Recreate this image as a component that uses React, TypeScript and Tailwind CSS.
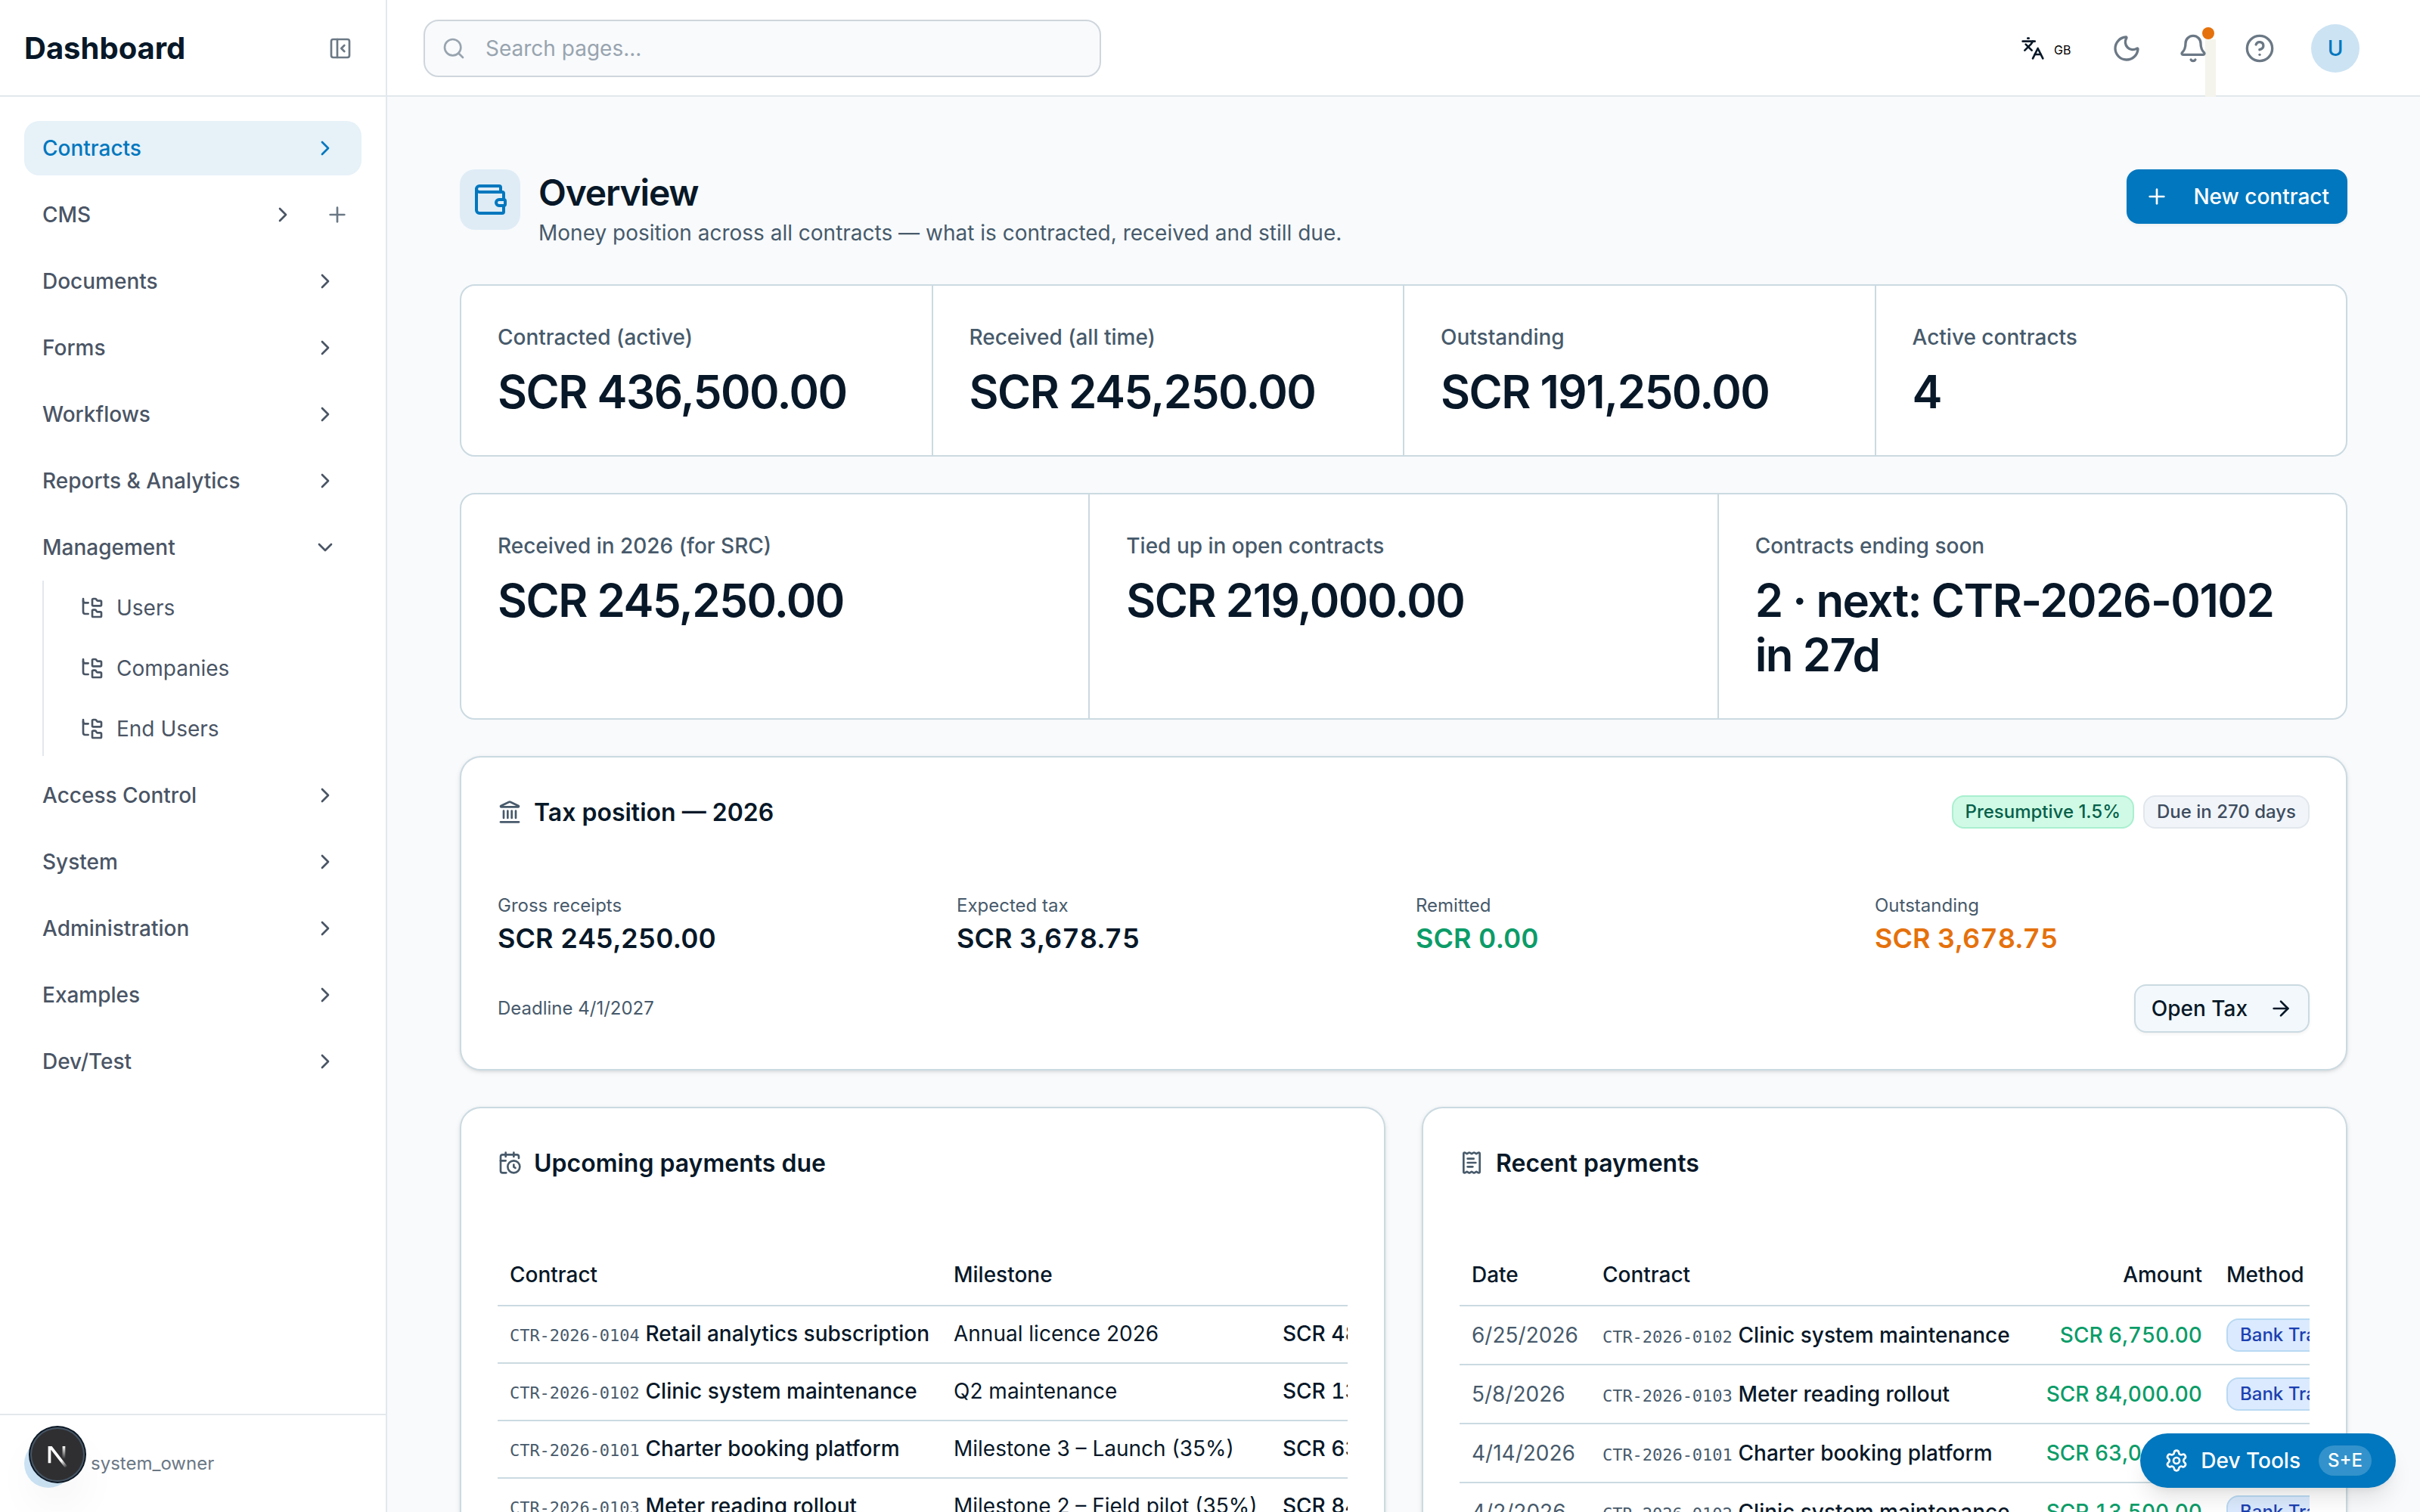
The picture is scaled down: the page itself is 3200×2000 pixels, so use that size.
import type { ReactNode } from 'react'
import clsx from 'clsx'
import {
  ArrowRight,
  Bell,
  CalendarClock,
  ChevronDown,
  ChevronRight,
  CircleHelp,
  FolderTree,
  Landmark,
  Languages,
  Moon,
  PanelLeftClose,
  Plus,
  ReceiptText,
  Search,
  Settings,
  Wallet,
} from 'lucide-react'

interface NavEntry {
  label: string
  active?: boolean
  canAdd?: boolean
  children?: string[]
}

const navEntries: NavEntry[] = [
  { label: 'Contracts', active: true },
  { label: 'CMS', canAdd: true },
  { label: 'Documents' },
  { label: 'Forms' },
  { label: 'Workflows' },
  { label: 'Reports & Analytics' },
  { label: 'Management', children: ['Users', 'Companies', 'End Users'] },
  { label: 'Access Control' },
  { label: 'System' },
  { label: 'Administration' },
  { label: 'Examples' },
  { label: 'Dev/Test' },
]

const totals = [
  { label: 'Contracted (active)', value: 'SCR 436,500.00' },
  { label: 'Received (all time)', value: 'SCR 245,250.00' },
  { label: 'Outstanding', value: 'SCR 191,250.00' },
  { label: 'Active contracts', value: '4' },
]

const yearStats = [
  { label: 'Received in 2026 (for SRC)', value: 'SCR 245,250.00' },
  { label: 'Tied up in open contracts', value: 'SCR 219,000.00' },
  { label: 'Contracts ending soon', value: '2 · next: CTR-2026-0102 in 27d' },
]

const taxFigures = [
  { label: 'Gross receipts', value: 'SCR 245,250.00', color: 'text-[#081828]' },
  { label: 'Expected tax', value: 'SCR 3,678.75', color: 'text-[#081828]' },
  { label: 'Remitted', value: 'SCR 0.00', color: 'text-[#0c9c68]' },
  { label: 'Outstanding', value: 'SCR 3,678.75', color: 'text-[#e5710c]' },
]

const upcoming = [
  { code: 'CTR-2026-0104', name: 'Retail analytics subscription', milestone: 'Annual licence 2026', amount: 'SCR 48,000.00' },
  { code: 'CTR-2026-0102', name: 'Clinic system maintenance', milestone: 'Q2 maintenance', amount: 'SCR 13,500.00' },
  { code: 'CTR-2026-0101', name: 'Charter booking platform', milestone: 'Milestone 3 – Launch (35%)', amount: 'SCR 63,000.00' },
  { code: 'CTR-2026-0103', name: 'Meter reading rollout', milestone: 'Milestone 2 – Field pilot (35%)', amount: 'SCR 84,000.00' },
]

const payments = [
  { date: '6/25/2026', code: 'CTR-2026-0102', name: 'Clinic system maintenance', amount: 'SCR 6,750.00' },
  { date: '5/8/2026', code: 'CTR-2026-0103', name: 'Meter reading rollout', amount: 'SCR 84,000.00' },
  { date: '4/14/2026', code: 'CTR-2026-0101', name: 'Charter booking platform', amount: 'SCR 63,000.00' },
  { date: '4/2/2026', code: 'CTR-2026-0102', name: 'Clinic system maintenance', amount: 'SCR 13,500.00' },
]

function NavItem({ entry }: { entry: NavEntry }) {
  const Chevron = entry.children ? ChevronDown : ChevronRight

  return (
    <li>
      <div
        className={clsx(
          'flex h-9 items-center rounded-[10px] pl-3 text-sm font-medium',
          entry.canAdd ? 'pr-2' : 'pr-4',
          entry.active ? 'bg-[#e6f1f8] text-[#0077be]' : 'text-[#4a5565]',
        )}
      >
        <span className="flex-1">{entry.label}</span>
        <Chevron className="size-4" />
        {entry.canAdd && <Plus className="ml-5 size-4 text-[#6b7885]" />}
      </div>
      {entry.children && (
        <ul className="mt-1 ml-3 flex flex-col gap-1 border-l border-[#e2e8ec] pl-3">
          {entry.children.map((child) => (
            <li key={child} className="flex h-9 items-center gap-2 px-3 text-sm text-[#4a5565]">
              <FolderTree className="size-4" />
              {child}
            </li>
          ))}
        </ul>
      )}
    </li>
  )
}

function Sidebar() {
  return (
    <aside className="flex w-64 shrink-0 flex-col border-r border-[#e2e8ec] bg-white">
      <div className="flex h-16 shrink-0 items-center justify-between border-b border-[#e2e8ec] pt-px pr-[22px] pl-4">
        <span className="text-xl font-bold">Dashboard</span>
        <PanelLeftClose className="size-4 text-[#6b7885]" />
      </div>
      <ul className="flex flex-1 flex-col gap-2 p-4">
        {navEntries.map((entry) => (
          <NavItem key={entry.label} entry={entry} />
        ))}
      </ul>
      <div className="relative flex h-[65px] shrink-0 items-center gap-3 border-t border-[#e2e8ec] px-4">
        <span className="size-8 rounded-full bg-[#cce4f5]" />
        <span className="text-xs text-[#6b7885]">system_owner</span>
        <NextBadge />
      </div>
    </aside>
  )
}

function NextBadge() {
  return (
    <div className="absolute top-2 left-5 size-9 rounded-full bg-[#2f2f31] shadow-[0_0_0_1px_#0b1724,inset_0_0_0_1px_#465564,0_16px_32px_-8px_rgba(0,0,0,0.14)]">
      <svg className="-m-0.5 size-10" viewBox="0 0 40 40" fill="none">
        <g transform="translate(12.4 13)" strokeWidth="1.86" clipPath="url(#badge-clip)">
          <path d="M13.3 15.2 L2.34 1 V12.6" stroke="url(#badge-diagonal)" />
          <path d="M11.825 1.5 V13.1" stroke="url(#badge-stem)" />
        </g>
        <defs>
          <clipPath id="badge-clip">
            <rect y="1.5" width="16" height="14" />
          </clipPath>
          <linearGradient id="badge-diagonal" x1="9.95" y1="11.14" x2="13.6" y2="15.6" gradientUnits="userSpaceOnUse">
            <stop stopColor="white" />
            <stop offset="1" stopColor="white" stopOpacity="0" />
          </linearGradient>
          <linearGradient id="badge-stem" x1="11.8" y1="1.4" x2="11.8" y2="9.9" gradientUnits="userSpaceOnUse">
            <stop stopColor="white" />
            <stop offset="1" stopColor="white" stopOpacity="0" />
          </linearGradient>
        </defs>
      </svg>
    </div>
  )
}

function TopBar() {
  return (
    <header className="flex h-16 shrink-0 items-center justify-between border-b border-[#e2e8ec] bg-white pt-px pr-10 pl-6">
      <div className="flex h-[38px] w-md items-center gap-[13px] rounded-[10px] border border-[#cfd6dc] bg-[#f8fafc] px-[11px] text-sm text-[#98a4af]">
        <Search className="size-4" />
        Search pages...
      </div>
      <div className="flex items-center gap-2 text-[#6b7885]">
        <div className="mr-[18px] flex items-center gap-1.5 text-[#081828]">
          <Languages className="size-4" />
          <span className="mt-0.5 w-3 text-[8px] text-black">GB</span>
        </div>
        <span className="-ml-2 flex size-9 items-center justify-center">
          <Moon className="size-5" />
        </span>
        <span className="relative flex size-9 items-center justify-center">
          <span className="absolute top-3 left-[26px] h-[38px] w-[7px] bg-[#f4f4ec]" />
          <Bell className="relative size-5" />
          <span className="absolute top-1 left-6 size-2 rounded-full bg-[#e5710c]" />
        </span>
        <span className="flex size-9 items-center justify-center">
          <CircleHelp className="size-5" />
        </span>
        <span className="ml-2 flex size-8 items-center justify-center rounded-full bg-[#cce3f3] text-sm font-medium text-[#0077be]">
          U
        </span>
      </div>
    </header>
  )
}

function StatStrip({ stats, className }: { stats: { label: string; value: string }[]; className: string }) {
  return (
    <div className={clsx('grid gap-px overflow-hidden rounded-[10px] border border-[#cbdae1] bg-[#cbdae1]', className)}>
      {stats.map((stat) => (
        <div key={stat.label} className="bg-white p-6">
          <div className="text-sm font-medium text-[#475a6b]">{stat.label}</div>
          <div className="mt-2 text-3xl font-semibold tracking-tight">{stat.value}</div>
        </div>
      ))}
    </div>
  )
}

function Card({ icon, title, badges, children }: { icon: ReactNode; title: string; badges?: ReactNode; children: ReactNode }) {
  return (
    <section className="rounded-[14px] border border-[#cbdae1] bg-white p-6 shadow-sm">
      <div className="mb-[42px] flex h-6 items-center justify-between">
        <h2 className="flex items-center gap-2 font-semibold">
          <span className="text-[#475a6b]">{icon}</span>
          <span className="pt-px">{title}</span>
        </h2>
        <div className="flex gap-1.5">{badges}</div>
      </div>
      {children}
    </section>
  )
}

function ContractRef({ code, name }: { code: string; name: string }) {
  return (
    <>
      <span className="font-['DejaVu_Sans_Mono',monospace] text-[11px] leading-none tracking-[-0.02px] text-[#475a6b]">
        {code}
      </span>{' '}
      <span className="font-medium">{name}</span>
    </>
  )
}

function UpcomingTable() {
  return (
    <div className="overflow-hidden">
      <table className="w-[640px] table-fixed text-left text-sm whitespace-nowrap">
        <thead>
          <tr className="h-[40.5px] border-b border-[#cbdae1]">
            <th className="w-[293.5px] px-2 font-medium">Contract</th>
            <th className="w-[215.5px] px-2 font-medium">Milestone</th>
            <th className="px-2 text-right font-medium">Amount</th>
          </tr>
        </thead>
        <tbody>
          {upcoming.map((row) => (
            <tr key={row.code} className="h-[38px] border-b border-[#cbdae1]">
              <td className="px-2 pb-px">
                <ContractRef code={row.code} name={row.name} />
              </td>
              <td className="px-2 pb-px">{row.milestone}</td>
              <td className="pb-px pl-2.5 font-medium tabular-nums">{row.amount}</td>
            </tr>
          ))}
        </tbody>
      </table>
    </div>
  )
}

function PaymentsTable() {
  return (
    <div className="overflow-hidden">
      <table className="w-[610px] table-fixed text-left text-sm whitespace-nowrap">
        <thead>
          <tr className="h-[40.5px] border-b border-[#cbdae1]">
            <th className="w-[86.5px] px-2 font-medium">Date</th>
            <th className="w-[284.5px] px-2 font-medium">Contract</th>
            <th className="w-32 px-2 text-right font-medium">Amount</th>
            <th className="px-2 font-medium">Method</th>
          </tr>
        </thead>
        <tbody>
          {payments.map((row) => (
            <tr key={row.date} className="h-[39px] border-b border-[#cbdae1]">
              <td className="px-2 text-[#475a6b]">{row.date}</td>
              <td className="px-2">
                <ContractRef code={row.code} name={row.name} />
              </td>
              <td className="px-2 text-right font-medium text-[#0c9c68] tabular-nums">{row.amount}</td>
              <td className="px-2">
                <span className="flex h-[22px] w-fit items-center rounded-lg border border-[#b9d9f2] bg-[#dbeafe] px-2 text-xs font-medium text-[#1c40b0]">
                  Bank Transfer
                </span>
              </td>
            </tr>
          ))}
        </tbody>
      </table>
    </div>
  )
}

function TaxCard() {
  return (
    <Card
      icon={<Landmark className="size-4" />}
      title="Tax position — 2026"
      badges={
        <>
          <span className="rounded-lg border border-[#a9efd0] bg-[#d0fae5] px-2 py-0.5 text-xs font-medium text-[#06604a]">
            Presumptive 1.5%
          </span>
          <span className="rounded-lg border border-[#e1e7ed] bg-[#f1f5f9] px-2 py-0.5 text-xs font-medium text-[#3d4c5e]">
            Due in 270 days
          </span>
        </>
      }
    >
      <div className="grid grid-cols-4 gap-4">
        {taxFigures.map((figure) => (
          <div key={figure.label}>
            <div className="text-xs text-[#475a6b]">{figure.label}</div>
            <div className={clsx('pb-px text-lg leading-[27px] font-semibold tabular-nums', figure.color)}>{figure.value}</div>
          </div>
        ))}
      </div>
      <div className="mt-4 flex items-center justify-between">
        <span className="text-xs text-[#475a6b]">Deadline 4/1/2027</span>
        <button className="flex h-8 items-center gap-3.5 rounded-lg border border-[#cbdae1] bg-[#f2f8fc] pr-2.5 pl-[10.5px] text-sm font-medium shadow-xs">
          Open Tax
          <ArrowRight className="size-4" />
        </button>
      </div>
    </Card>
  )
}

function DevTools() {
  return (
    <button className="absolute right-4 bottom-4 flex h-9 items-center gap-2 rounded-full bg-[#0077be] px-4 text-sm font-medium text-white shadow-lg">
      <Settings className="size-4" />
      Dev Tools
      <span className="ml-1 flex h-5 items-center rounded-full bg-white/20 px-1.5 text-xs">S+E</span>
    </button>
  )
}

export default function App() {
  return (
    <div className="relative flex h-[1000px] w-[1600px] overflow-hidden bg-[#f8fafc] font-['Inter',sans-serif] text-[#081828] [zoom:2]">
      <Sidebar />
      <div className="flex min-w-0 flex-1 flex-col">
        <TopBar />
        <main className="flex min-h-0 flex-1 flex-col gap-6 overflow-hidden p-12 *:shrink-0">
          <div className="flex items-start justify-between">
            <div className="flex gap-3">
              <span className="flex size-10 items-center justify-center rounded-[10px] bg-[#dfecf6] text-[#0077be]">
                <Wallet className="size-6" />
              </span>
              <div>
                <h1 className="pb-px text-2xl leading-[31px] font-semibold tracking-tight">Overview</h1>
                <p className="text-sm text-[#475a6b]">
                  Money position across all contracts — what is contracted, received and still due.
                </p>
              </div>
            </div>
            <button className="flex h-9 items-center gap-4 rounded-lg bg-[#0077be] px-3 text-sm font-medium text-white shadow-xs">
              <Plus className="size-4" />
              New contract
            </button>
          </div>
          <StatStrip stats={totals} className="grid-cols-4" />
          <StatStrip stats={yearStats} className="grid-cols-3" />
          <TaxCard />
          <div className="grid grid-cols-2 gap-6">
            <Card icon={<CalendarClock className="size-4" />} title="Upcoming payments due">
              <UpcomingTable />
            </Card>
            <Card icon={<ReceiptText className="size-4" />} title="Recent payments">
              <PaymentsTable />
            </Card>
          </div>
        </main>
      </div>
      <DevTools />
    </div>
  )
}
